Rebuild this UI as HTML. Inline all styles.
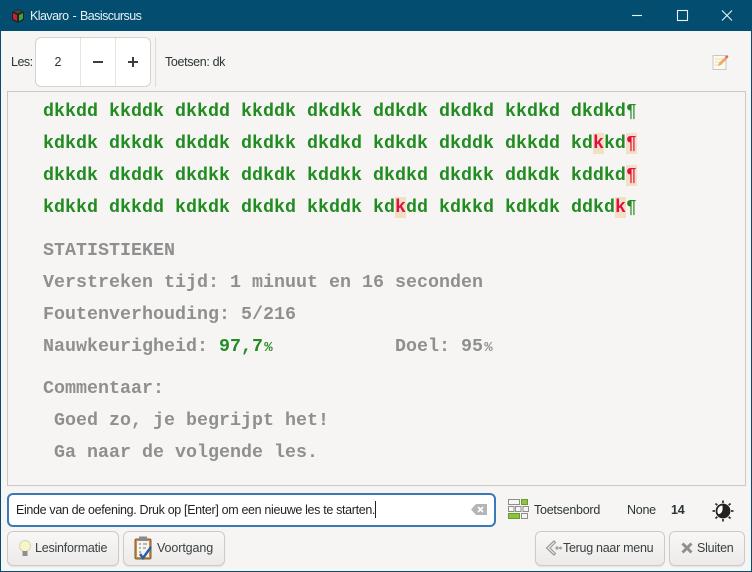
<!DOCTYPE html>
<html><head><meta charset="utf-8">
<style>
html,body{margin:0;padding:0}
body{width:752px;height:572px;position:relative;overflow:hidden;background:#f6f5f4;font-family:"Liberation Sans",sans-serif;font-size:12px;color:#2e3436}
.a{position:absolute;white-space:pre}
.t{font-size:12.5px;line-height:16px;letter-spacing:-.25px}
.m{position:absolute;left:43px;white-space:pre;font:bold 18.33px/24px "Liberation Mono",monospace;color:#8f8f8f}
.g{color:#228b22}
.e{color:#e0103f;background:#f2dfc4}
.p{font-weight:normal}
.pc{display:inline-block;width:11px;font-size:14px;line-height:14px;text-align:center}
.btn{position:absolute;box-sizing:border-box;height:35px;top:531px;border:1px solid #cfcac5;border-radius:6px;background:linear-gradient(#f8f7f6,#edebe9);box-shadow:0 1px 1px rgba(0,0,0,.08)}
.bt{position:absolute;white-space:pre;font-size:12.5px;line-height:16px;letter-spacing:-.22px;top:540px;color:#3a3f41}
</style></head><body>
<div class="a" style="left:0;top:0;width:752px;height:572px;box-sizing:border-box;border:1px solid #034e70;border-top:0"></div>
<div class="a" style="left:0;top:0;width:752px;height:31px;background:#034e70"></div>
<svg class="a" style="left:10px;top:8px" width="16" height="16" viewBox="0 0 16 16"><path d="M2 4l6-3 6 3v8l-6 3-6-3z" fill="#222"/><path d="M3 5l4 2v6l-4-2z" fill="#c8203a"/><path d="M9 7l4-2v6l-4 2z" fill="#3aa53a"/><path d="M4 3.500l4-1.500 4 1.500-4 2z" fill="#4a4a3a"/></svg>
<div class="a" style="left:30px;top:8px;font-size:12.5px;line-height:16px;letter-spacing:-.55px;word-spacing:1px;color:#e6f0f4">Klavaro - Basiscursus</div>
<svg class="a" style="left:620px;top:0" width="132" height="31" fill="none" stroke="#e8f2f6" stroke-width="1.100"><path d="M12 15.500h10"/><rect x="57.500" y="10.500" width="10" height="10"/><path d="M102 10.500l10 10M112 10.500l-10 10"/></svg>

<div class="a t" style="left:11px;top:54px;letter-spacing:-.5px">Les:</div>
<div class="a" style="left:35px;top:37px;width:116px;height:50px;box-sizing:border-box;background:#fff;border:1px solid #d6d2ce;border-radius:6px"></div>
<div class="a" style="left:80px;top:38px;width:1px;height:48px;background:#e6e3e0"></div>
<div class="a" style="left:115px;top:38px;width:1px;height:48px;background:#e6e3e0"></div>
<div class="a t" style="left:54.500px;top:54px">2</div>
<svg class="a" style="left:90px;top:54px" width="52" height="16" stroke="#3a3f41" stroke-width="2" fill="none"><path d="M3 8h10"/><path d="M38 8h10M43 3v10"/></svg>
<div class="a" style="left:155px;top:37px;width:1px;height:50px;background:#dedbd8"></div>
<div class="a t" style="left:165px;top:54px;letter-spacing:-.35px">Toetsen: dk</div>
<svg class="a" style="left:711px;top:53px" width="18" height="18" viewBox="0 0 18 18"><rect x="2" y="2.500" width="13" height="14" fill="#fbf8ee" stroke="#c9c6cc"/><path d="M4 6h8M4 9h6M4 12h5" stroke="#eadfae"/><path d="M7 13l1-3 7-7 2 2-7 7z" fill="#eda86a"/><path d="M14 4l2-2 1.500 1.500-2 2z" fill="#d9606a"/></svg>

<div class="a" style="left:7px;top:91px;width:739px;height:395px;box-sizing:border-box;border:1px solid #cdc7c2;background:#f6f5f4"></div>

<div class="m" style="top:100px"><span class="g">dkkdd kkddk dkkdd kkddk dkdkk ddkdk dkdkd kkdkd dkdkd</span><span class="g p">¶</span></div>
<div class="m" style="top:132px"><span class="g">kdkdk dkkdk dkddk dkdkk dkdkd kdkdk dkddk dkkdd kd</span><span class="e">k</span><span class="g">kd</span><span class="e p">¶</span></div>
<div class="m" style="top:164px"><span class="g">dkkdk dkddk dkdkk ddkdk kddkk dkdkd dkdkk ddkdk kddkd</span><span class="e p">¶</span></div>
<div class="m" style="top:196px"><span class="g">kdkkd dkkdd kdkdk dkdkd kkddk kd</span><span class="e">k</span><span class="g">dd kdkkd kdkdk ddkd</span><span class="e">k</span><span class="g p">¶</span></div>
<div class="m" style="top:239px">STATISTIEKEN</div>
<div class="m" style="top:271px">Verstreken tijd: 1 minuut en 16 seconden</div>
<div class="m" style="top:303px">Foutenverhouding: 5/216</div>
<div class="m" style="top:335px">Nauwkeurigheid: <span class="g">97,7<span class="pc">%</span></span>           Doel: 95<span class="pc">%</span></div>
<div class="m" style="top:377px">Commentaar:</div>
<div class="m" style="top:409px"> Goed zo, je begrijpt het!</div>
<div class="m" style="top:441px"> Ga naar de volgende les.</div>

<div class="a" style="left:7px;top:493px;width:489px;height:34px;box-sizing:border-box;background:#fff;border:2px solid #3b78b8;border-radius:6px"></div>
<div class="a" style="left:16px;top:502px;font-size:12.5px;line-height:16px;letter-spacing:-.34px;color:#1f2224">Einde van de oefening. Druk op [Enter] om een nieuwe les te starten.</div>
<div class="a" style="left:375px;top:501px;width:1px;height:17px;background:#222"></div>
<svg class="a" style="left:471px;top:503px" width="17" height="13"><path d="M0 6.500L5 1h11v11H5z" fill="#b4b6b6"/><path d="M7 4l5 5M12 4l-5 5" stroke="#fff" stroke-width="1.600"/></svg>

<svg class="a" style="left:508px;top:499px" width="22" height="20" fill="none" stroke="#8a8f8a" stroke-width="1"><rect x=".5" y=".5" width="11" height="5"/><rect x="13.500" y=".5" width="6" height="5" fill="#8cc63f" stroke="#6a9a2f"/><rect x=".5" y="7.500" width="5.500" height="5"/><rect x="7.500" y="7.500" width="5.500" height="5"/><rect x="15" y="7.500" width="5.500" height="5"/><rect x=".5" y="14.500" width="11" height="5" fill="#8cc63f" stroke="#6a9a2f"/><rect x="13.500" y="14.500" width="6" height="5"/></svg>
<div class="a t" style="left:534px;top:502px">Toetsenbord</div>
<div class="a t" style="left:627px;top:502px">None</div>
<div class="a t" style="left:671px;top:502px;font-weight:bold">14</div>
<svg class="a" style="left:711px;top:499px" width="24" height="24" viewBox="0 0 24 24"><circle cx="12" cy="12" r="6.500" fill="#fff" stroke="#222" stroke-width="1.800"/><path d="M11 5.500a6.500 6.500 0 1 1-5 9.500c4 1 7-3 5-9.500z" fill="#222"/><path d="M12 1.500v2.500M12 20v2.500M1.500 12H4M20 12h2.500M4.500 4.500l1.800 1.800M17.700 17.700l1.800 1.800M19.500 4.500l-1.800 1.800M6.300 17.700l-1.800 1.800" stroke="#333" stroke-width="1.800"/></svg>

<div class="btn" style="left:7px;width:112px"></div>
<svg class="a" style="left:18px;top:539px" width="14" height="20" viewBox="0 0 14 20"><circle cx="7" cy="7" r="5.500" fill="#faf5c8" stroke="#d8d6b0"/><rect x="4.500" y="12" width="5" height="5" fill="#8f8f8f"/></svg>
<div class="bt" style="left:35px">Lesinformatie</div>

<div class="btn" style="left:123px;width:102px"></div>
<svg class="a" style="left:134px;top:535px" width="22" height="27" viewBox="0 0 22 27"><rect x="1" y="4" width="16" height="20" rx="1.500" fill="#c98f45" stroke="#7a5a30"/><rect x="3" y="6" width="12" height="16" fill="#f4f4f0"/><rect x="5" y="1.500" width="8" height="4.500" fill="#8a8a88"/><path d="M5 9h2M5 13h2M5 17h2M9 9h4M9 13h3" stroke="#777"/><path d="M6 19l3 4 8-11" fill="none" stroke="#2a5fa8" stroke-width="2.500"/></svg>
<div class="bt" style="left:157px;letter-spacing:-.1px">Voortgang</div>

<div class="btn" style="left:535px;width:130px"></div>
<svg class="a" style="left:545px;top:539px" width="18" height="18" fill="none" stroke="#9a9a9a" stroke-width="1.200"><path d="M9 2L1.500 9 9 16l1.500-1.500L5 9l5.500-5.500z"/><circle cx="12" cy="9" r="1"/><circle cx="15.500" cy="9" r=".8"/></svg>
<div class="bt" style="left:563px;letter-spacing:-.28px">Terug naar menu</div>

<div class="btn" style="left:669px;width:76px"></div>
<svg class="a" style="left:681px;top:542px" width="12" height="12"><path d="M1.500 1.500l9 9M10.500 1.500l-9 9" stroke="#8f8f8f" stroke-width="3"/></svg>
<div class="bt" style="left:697px;letter-spacing:-.25px">Sluiten</div>
</body></html>
